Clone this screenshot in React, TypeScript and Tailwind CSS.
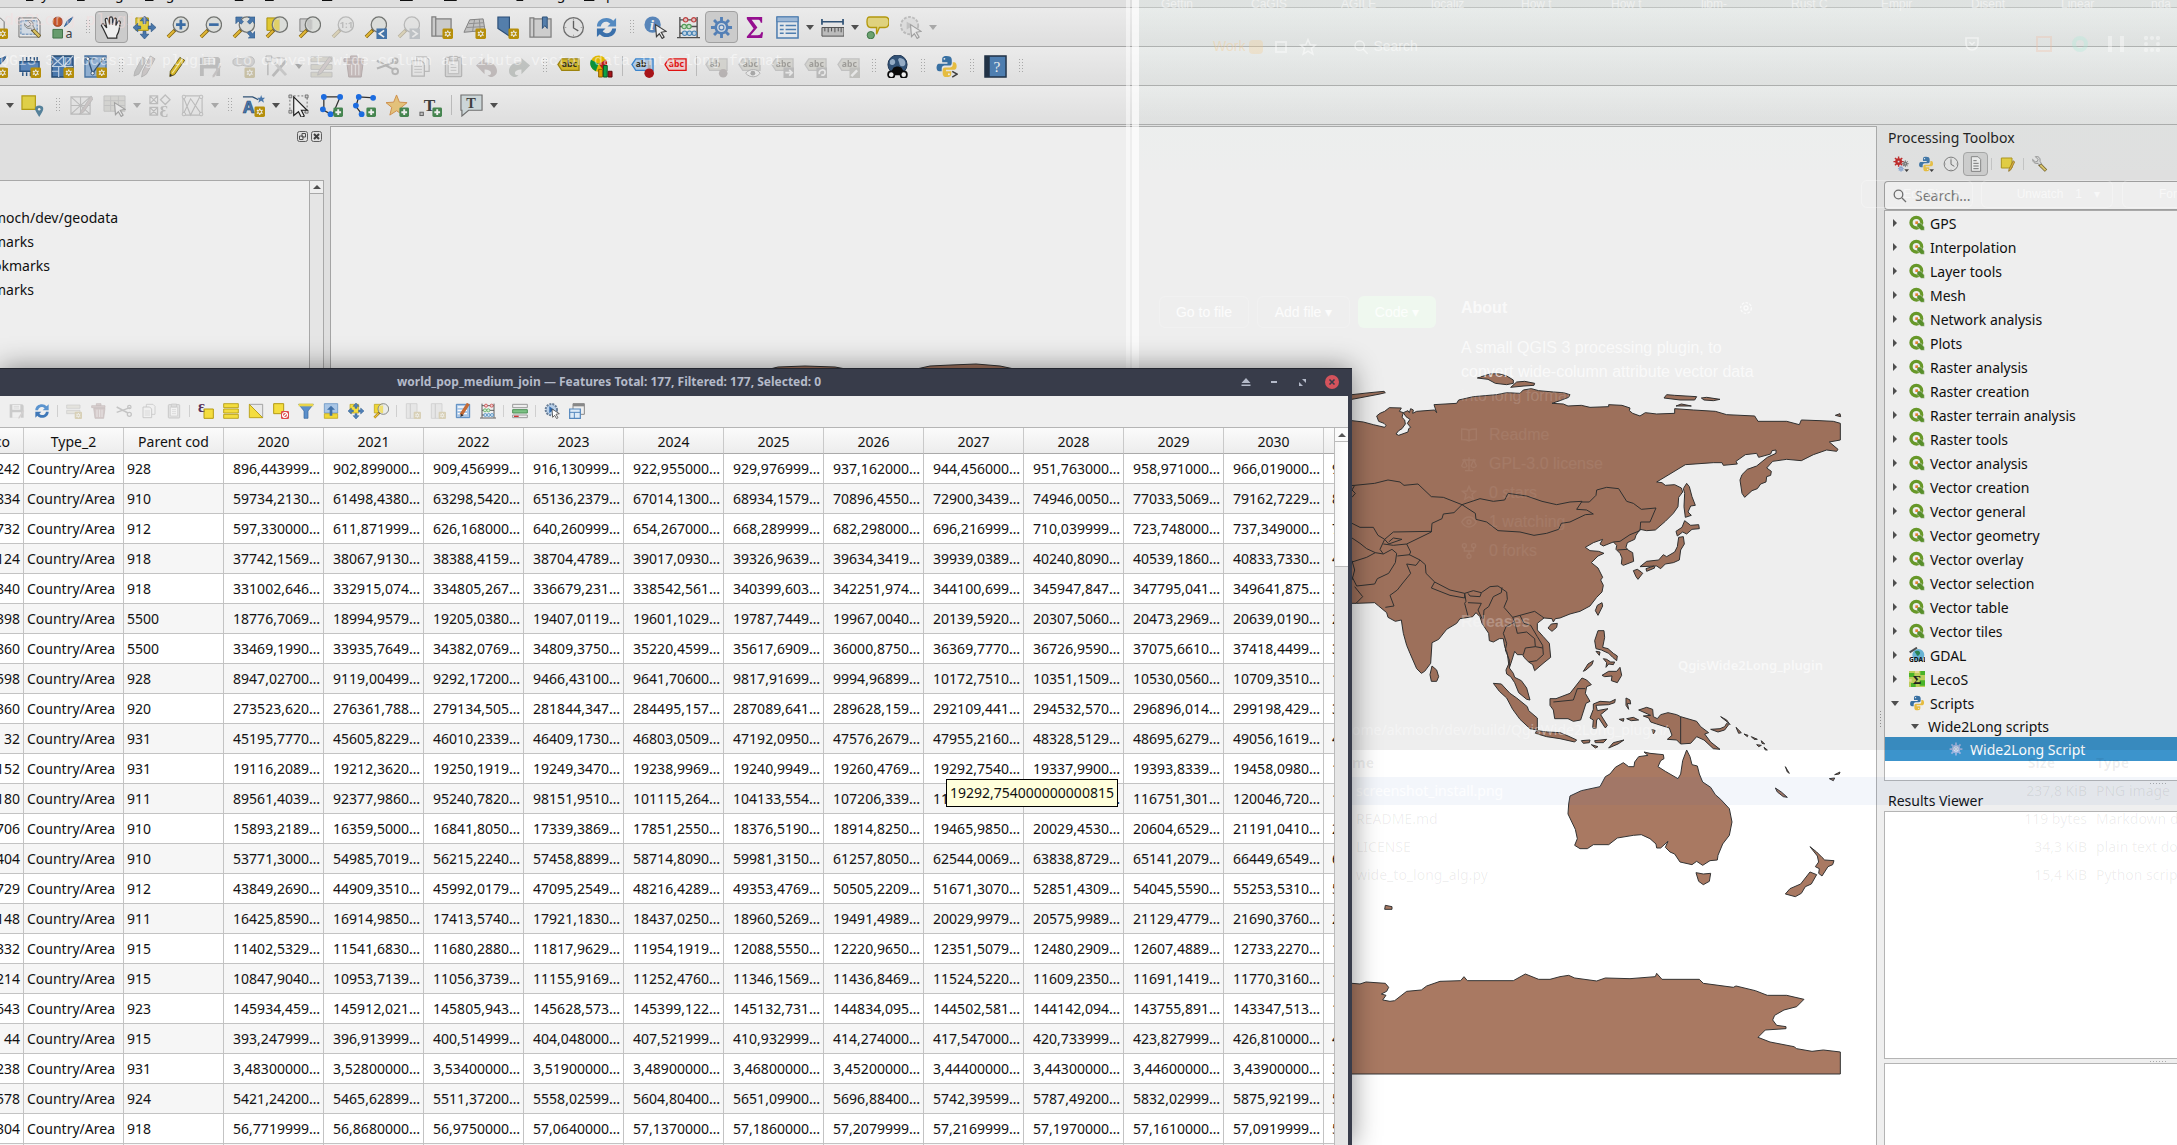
import React from "react";
import type { ReactNode } from "react";

/* ---------- icon parts (24 x 24 grid) ---------- */

const Ico = ({ children, small }: { children: ReactNode; small?: boolean }) => (
  <svg viewBox="0 0 24 24" className={small ? "size-4 shrink-0" : "size-[23px] shrink-0"} fill="none" aria-hidden="true">
    {children}
  </svg>
);

const Badge = () => (
  <g>
    <rect x="13" y="13" width="11" height="11" rx="1.5" fill="#c39a0c" />
    <path d="M18.5 15v7M15.5 16.7l6 3.6M21.5 16.7l-6 3.6" stroke="#fff" strokeWidth="1.3" />
    <circle cx="18.5" cy="18.5" r="1.9" stroke="#fff" strokeWidth="1" fill="#c39a0c" />
  </g>
);
const Plus = () => (
  <g>
    <rect x="14" y="14" width="10" height="10" rx="1.5" fill="#4c8f56" />
    <path d="M19 16v6M16 19h6" stroke="#fff" strokeWidth="2" />
  </g>
);
const Cursor = () => <path d="M12 9l11 7-5 1 3 5-2 1.500-3-5-3 3z" fill="#fff" stroke="#444" strokeWidth="1.200" />;
const Lens = ({ children }: { children?: ReactNode }) => (
  <>
    <path d="M10 14L2 22" stroke="#8a6a10" strokeWidth="3.600" />
    <path d="M8.500 15.500L2 22" stroke="#f1c43a" strokeWidth="2.200" />
    <circle cx="15.500" cy="9" r="8" fill="#e9ebe8" fillOpacity=".85" stroke="#7b7d7a" strokeWidth="1.300" />
    {children}
  </>
);
const Sheet = () => <path d="M3 2h13l4 4v16H3z" fill="#f7f7f7" stroke="#777" />;
const Tag = ({ fill, stroke, text = "abc", color = "#3a3320" }: { fill: string; stroke: string; text?: string; color?: string }) => (
  <>
    <path d="M5 4h18v12H5L1 10z" fill={fill} stroke={stroke} strokeWidth="1.400" />
    <text x="5" y="13" fontSize="9" fontWeight="bold" fontFamily="Noto Sans, sans-serif" fill={color}>{text}</text>
  </>
);
const PencilShape = ({ fill = "#e6c229" }: { fill?: string }) => (
  <>
    <path d="M14.500 2.500l5 3L9 20.500l-5 2 .5-5.500z" fill={fill} stroke="#6d6222" strokeWidth="1" />
    <path d="M17 4L6.500 19" stroke="#fff6b0" strokeWidth="1.200" />
    <path d="M4 22.500l.3-3 2.500 1.700z" fill="#333" />
  </>
);
const Gear = ({ c = "#5b8ac4", solid }: { c?: string; solid?: boolean }) => (
  <g stroke={c}>
    <path d="M12 1v22M1 12h22M4.200 4.200l15.600 15.600M19.800 4.200L4.200 19.800" strokeWidth="3" strokeDasharray="5 12.200 5 40" />
    <circle cx="12" cy="12" r="6" strokeWidth="2.600" fill={solid ? c : "#d9e3ef"} />
    <circle cx="12" cy="12" r="2.500" strokeWidth="1.200" fill="#e8eef5" />
  </g>
);
const Arrows4 = ({ c = "#4f80b8" }: { c?: string }) => (
  <path d="M12 0l4.500 5h-3v3h-3V5h-3zM12 24l-4.500-5h3v-3h3v3h3zM0 12l5-4.500v3h3v3H5v3zM24 12l-5 4.500v-3h-3v-3h3v-3z" fill={c} stroke="#2e5a8c" strokeWidth=".7" />
);
const Refresh = () => (
  <>
    <path d="M2 11C2 5 7 2 12 2c3 0 5 1 7 3l3-3v9h-9l3-3c-4-4-9-2-10 3z" fill="#5b94cf" />
    <path d="M22 13c0 6-5 9-10 9-3 0-5-1-7-3l-3 3v-9h9l-3 3c4 4 9 2 10-3z" fill="#3f78b8" />
  </>
);
const Python = () => (
  <>
    <path d="M12 1C7 1 7.500 3.500 7.500 6v1.500H13V9H4c-3 0-3.500 8 .5 8H7v-3c0-2 1.500-3 3-3h5c2 0 2.500-1.500 2.500-3V5c0-3-2-4-5.500-4z" fill="#3d78ae" />
    <path d="M12 23c5 0 5-2 5-4.500V17h-5.500v-1.500H20c3.500 0 3.500-8 0-8h-1.500V10c0 2.500-1.500 3-3 3h-5c-2 0-2.500 1.500-2.500 3v3c0 3 1.500 4 4 4z" fill="#f6ca45" />
    <circle cx="9.800" cy="4" r="1" fill="#fff" />
    <circle cx="14.500" cy="20" r="1" fill="#fff" />
  </>
);
const Clock = () => (
  <>
    <circle cx="12" cy="12" r="10.300" fill="#f2f2f2" stroke="#777" strokeWidth="1.400" />
    <path d="M12 5v7.500l5 3" stroke="#666" strokeWidth="1.400" />
    <path d="M12 2.500v2M12 19.500v2M2.500 12h2M19.500 12h2" stroke="#aaa" />
  </>
);
const Abacus = () => (
  <>
    <path d="M3 1v21M21 1v21M0 22.500h24M3 4h18M3 11h18M3 18h18" stroke="#555" strokeWidth="1.400" />
    <g strokeWidth="1.200">
      <g fill="#f0d0d0" stroke="#cc4747"><circle cx="9" cy="4" r="2.300" /><circle cx="17.500" cy="4" r="2.300" /></g>
      <g fill="#d5efd5" stroke="#59a95f"><circle cx="7.500" cy="11" r="2.300" /><circle cx="12.500" cy="11" r="2.300" /></g>
      <g fill="#cfe3f3" stroke="#4f8fc4"><circle cx="8" cy="18" r="2.300" /><circle cx="13" cy="18" r="2.300" /><circle cx="18" cy="18" r="2.300" /></g>
    </g>
  </>
);
const Wrench = () => (
  <>
    <path d="M11 12l10 10" stroke="#6c5a20" strokeWidth="5" />
    <path d="M12.500 13.500l8 8" stroke="#e8cf6c" strokeWidth="3" />
    <path d="M1 5l4 4 3-1 1-3-4-4c5-1 8 2 7 7l2 3-2.500 2.500L9 11C4 12 1 9 1 5z" fill="#e4e4e4" stroke="#777" />
  </>
);
const Cut = () => (
  <>
    <path d="M1 6l17 9M1 14L21 7" stroke="#777" strokeWidth="2.200" />
    <circle cx="20" cy="17" r="3" stroke="#777" strokeWidth="2" />
    <circle cx="20" cy="6" r="2.500" stroke="#777" strokeWidth="2" />
  </>
);
const Copy = () => (
  <>
    <path d="M8 2h10l3 3v12H8z" fill="#f4f4f4" stroke="#888" strokeWidth="1.300" />
    <path d="M3 6h10l3 3v13H3z" fill="#f4f4f4" stroke="#777" strokeWidth="1.300" />
    <path d="M5.500 12h8M5.500 15h8M5.500 18h8" stroke="#999" />
  </>
);
const Paste = () => (
  <>
    <rect x="3.500" y="2.500" width="17" height="20" rx="1" fill="#ccc" stroke="#777" strokeWidth="1.300" />
    <path d="M6.500 6h11v13.500h-11z" fill="#fafafa" stroke="#888" />
    <path d="M8 1.500h8V6H8z" fill="#bbb" stroke="#777" />
    <path d="M9 10h6M9 13h6M9 16h6" stroke="#999" />
  </>
);
const Trash = () => (
  <>
    <path d="M4 8h17l-2 15H6z" fill="#b98080" stroke="#8a5555" />
    <path d="M1 4h20v3H1zM8 4V1h7v3" fill="#c58f8f" stroke="#8a5555" />
    <path d="M9 10v11M13 10v11M16.500 10v11" stroke="#f0dcdc" strokeWidth="1.300" />
  </>
);
const Save = () => (
  <>
    <path d="M1 2h19l2 2v18H1z" fill="#8b8b8b" />
    <path d="M5 3h12v7H5zM5 14h13v8H5z" fill="#f1f1f1" />
    <path d="M7 5h8M7 7.500h8" stroke="#999" />
    <path d="M23 12l-7 11-2 .5.300-2.500 7-10.500z" fill="#a99" />
  </>
);
const GridPen = () => (
  <>
    <path d="M1 3h20v18H1zM1 12h20M11 3v18M1 3l20 18M21 3L1 21" stroke="#888" strokeWidth="1.200" fill="#eee" />
    <path d="M22 2L12 17l-2 4 4-2L24 5z" fill="#b99" stroke="#888" />
  </>
);
const Page = () => (
  <>
    <path d="M5 1h10l4 4v18H5z" fill="#fafafa" stroke="#8a8a8a" strokeWidth="1.500" />
    <path d="M8 7h5M8 11h8M8 15h8M8 19h8" stroke="#777" strokeWidth="1.500" />
  </>
);
const Hand = () => (
  <path
    d="M8 23L3.500 13.500 1.500 10c0-2 2-2.200 3-.8L7 12.500 5.500 4c0-2 2.500-2.200 3-.2L10 9V2.500c0-2 3-2 3 0V9l1.300-5.500c.5-2 3-1.500 2.700.5L16.500 10l2-4c1-1.600 3-.8 2.700 1L20 14c-.5 3-1.500 5-2.500 6.500V23z"
    fill="#fff"
    stroke="#333"
    strokeWidth="1.300"
  />
);
const Qlogo = () => (
  <>
    <circle cx="11" cy="11.500" r="8" stroke="#6fa32c" strokeWidth="5" fill="#fff" />
    <path d="M12 12h5.500l5.500 6v5h-5l-6-6z" fill="#5f9a2f" stroke="#efefef" strokeWidth=".8" />
    <path d="M9.500 9.500h4v4h-4z" fill="#ef8b35" />
  </>
);

const icons: Record<string, ReactNode> = {
  newLayout: <><Sheet /><Badge /></>,
  layoutMgr: <><path d="M1 2h19l3 4v16H1z" fill="#f9f9f9" stroke="#777" /><path d="M3 5h17v14H3z" fill="#dfe9f4" stroke="#5b88bb" strokeDasharray="3 1" /><g transform="translate(6 4) scale(.8)"><Wrench /></g></>,
  style: <><circle cx="7" cy="6" r="5" fill="#cf5a2e" stroke="#9c3d1b" strokeWidth=".7" /><path d="M2 14h10v9H2z" fill="#6fa876" stroke="#42784b" /><path d="M14 11l3-6 6-4-4 6z" fill="#5d8dc6" stroke="#34659d" /><text x="15" y="23" fontSize="13" fontFamily="Noto Sans, sans-serif" fill="#444">a</text></>,
  hand: <Hand />,
  panSel: <><path d="M3 2h13v13H3z" fill="#f4dd3f" stroke="#b59b12" /><Arrows4 /></>,
  zoomIn: <Lens><path d="M15.500 4v10M10.500 9h10" stroke="#3f74b0" strokeWidth="2.800" /></Lens>,
  zoomOut: <Lens><path d="M10.500 9h10" stroke="#3f74b0" strokeWidth="2.800" /></Lens>,
  zoomFull: <><Lens /><path d="M4 1h7L9 3l3 3-2.500 2.500-3-3L4 8zM24 1h-7l2 2-3 3 2.500 2.500 3-3L24 8zM24 23h-7l2-2-3-3 2.500-2.500 3 3 2.500-2.500z" fill="#4f80b8" stroke="#2e5a8c" strokeWidth=".6" /></>,
  zoomSel: <><path d="M2 2h13v13H2z" fill="#f0d736" stroke="#b59b12" /><Lens><path d="M10 4h5v11h-3l-3-4z" fill="#f0dc5a" opacity=".8" /></Lens></>,
  zoomLayer: <><path d="M2 3h11v13H2z" fill="#ddd" stroke="#888" /><Lens><path d="M10 4h5v10h-3l-3-4z" fill="#ccc" opacity=".7" /></Lens></>,
  zoomNative: <Lens><text x="9" y="13" fontSize="10" fontWeight="bold" fill="#888" fontFamily="Noto Sans, sans-serif">1:1</text></Lens>,
  zoomLast: <><Lens /><path d="M13 13h11v11H13z" fill="#4a7db5" /><path d="M21 15l-5 3.500 5 3.500" stroke="#fff" strokeWidth="1.800" /></>,
  zoomNext: <><Lens /><path d="M13 13h11v11H13z" fill="#8a9bb0" /><path d="M16 15l5 3.500-5 3.500" stroke="#fff" strokeWidth="1.800" /></>,
  newView: <><path d="M2 1h4v20H2zM6 3h16v18H3" fill="#d9d9d9" stroke="#888" strokeWidth="1.300" /><Badge /></>,
  new3d: <><path d="M7 4l14-1 2 12L1 17z" fill="#cfcfcf" stroke="#888" /><path d="M6 8l16-1M4 12l19-1M12 4l-2 12M17 3l1 12" stroke="#999" /><Badge /></>,
  newBookmark: <><path d="M2 1h12v20l-6-4-6-4z" fill="#5b87b8" stroke="#2f5580" strokeWidth="1.200" /><Badge /></>,
  bookmarks: <><path d="M1 2h4v20H1zM5 3h18v19H2" fill="#dcdcdc" stroke="#888" strokeWidth="1.300" /><path d="M14 1h5v12l-2.500-3-2.500 3z" fill="#5b87b8" stroke="#2f5580" /></>,
  clock: <Clock />,
  refresh: <Refresh />,
  identify: <><circle cx="9" cy="9" r="8.500" fill="#5f8fc7" /><text x="6" y="15" fontSize="16" fontStyle="italic" fontWeight="bold" fill="#fff" fontFamily="Liberation Serif, serif">i</text><Cursor /></>,
  abacus: <Abacus />,
  gear: <Gear />,
  sigma: <path d="M4 1h16v6h-1.500C18 4.500 17 4 15 4H9l6 8-7 8h7c3 0 3.500-1 4-3H21l-1 6H4v-1.500L11 13 4 3z" fill="#a0119a" />,
  table: <><path d="M1 1h22v22H1z" fill="#f4f8fc" stroke="#5487bd" strokeWidth="1.600" /><path d="M1 1h22v5H1z" fill="#a9c6e6" stroke="#5487bd" /><path d="M4 10h4M10 10h11M4 14h4M10 14h11M4 18h4M10 18h11" stroke="#5487bd" strokeWidth="1.600" /></>,
  ruler: <><path d="M1 6h22M1 3v6M23 3v6" stroke="#35597f" strokeWidth="1.800" /><path d="M1 12h23v9H1z" fill="#c9c9c9" stroke="#555" /><path d="M4 12v4M7.500 12v5M11 12v4M14.500 12v5M18 12v4M21 12v5" stroke="#555" /></>,
  tip: <><path d="M4 1h16c3 0 4 2 4 5s-1 6-4 6h-6l-3 7v-7H5c-3 0-4-2-4-6s1-5 3-5z" fill="#efe288" stroke="#c0a30e" strokeWidth="1.400" /><circle cx="5" cy="20" r="3.800" fill="#73ad78" stroke="#3f7a48" /></>,
  action: <><circle cx="11" cy="10" r="9" fill="#ddd" stroke="#888" strokeWidth="2" strokeDasharray="3 1.500" /><path d="M8 6l7 4-7 4z" fill="#999" /><Cursor /></>,
  feather: <><path d="M0 14C3 5 14 6 22 1c-1 5-6 8-8 10z" fill="#4f80b8" stroke="#2e5a8c" /><Badge /></>,
  chip: <><path d="M2 7h20v10H2z" fill="#6290c8" stroke="#2e5a8c" strokeWidth="1.400" /><path d="M5 2v4M9 2v4M13 2v4M17 2v4M20 2v4M5 18v4M9 18v4M13 18v4" stroke="#2e5a8c" strokeWidth="1.500" /><Badge /></>,
  mesh: <><path d="M1 1h22v22H1z" fill="#4f80b8" stroke="#274d78" strokeWidth="1.400" /><path d="M1 12h22M13 1v11M1 1l12 11M13 1L1 12M13 12L23 1M8 12v11M1 17h7" stroke="#cfe0f3" strokeWidth="1.200" /><Badge /></>,
  virtual: <><path d="M1 1h22v22H1z" fill="#9bbce0" stroke="#4f7cad" strokeWidth="1.400" /><path d="M4 4l5 15L20 4M4 4h7" stroke="#35597f" strokeWidth="1.400" /><g fill="#fff" stroke="#35597f"><circle cx="4" cy="4" r="1.800" /><circle cx="9" cy="19" r="1.800" /><circle cx="20" cy="4" r="1.800" /></g><Badge /></>,
  pencils: <><path d="M10 2l4 3L6 20l-5 2 1-5z" fill="#999" stroke="#777" /><path d="M18 1l5 3-9 16-5 3 1-6z" fill="#b9a0a0" stroke="#777" /></>,
  pencil: <PencilShape />,
  save: <Save />,
  addFeature: <><path d="M3 4c3-3 5 0 8 0s8-4 11-1 1 9-4 9-6-2-9-1-8 0-8-3 0-3 2-4z" fill="#bbb" stroke="#888" /><Badge /></>,
  vertex: <><path d="M3 3h18M3 3v18" stroke="#777" strokeWidth="1.400" /><path d="M1 1h6v6H1z" fill="#eee" stroke="#777" /><path d="M22 6L8 22" stroke="#888" strokeWidth="3" /><path d="M10 8l12 13" stroke="#aaa" strokeWidth="3" /></>,
  multi: <><path d="M1 2h22v5H1zM1 10h22v5H1zM1 18h22v5H1z" fill="#cfc79a" stroke="#999" /><path d="M20 2L9 17l-1 4 4-2L23 4z" fill="#caa" stroke="#888" /></>,
  trash: <Trash />,
  cut: <Cut />,
  copy: <Copy />,
  paste: <Paste />,
  undo: <path d="M1 11L10 3v5c9-1 13 4 13 9 0 3-2 5-5 6-3 0-4-1-5-2 5 1 6-6-3-6v5z" fill="#a08484" />,
  redo: <path d="M23 11L14 3v5C5 7 1 12 1 17c0 3 2 5 5 6 3 0 4-1 5-2-5 1-6-6 3-6v5z" fill="#8b9b8f" />,
  tag: <Tag fill="#e2c42f" stroke="#a88d10" />,
  chart: <><circle cx="9" cy="9" r="8.500" fill="#efc500" /><path d="M9 9L1 5a9 9 0 00 5 12z" fill="#0a9c40" /><path d="M9 9l8-4a9 9 0 01-3 11z" fill="#c8201c" /><path d="M9 15h4v8H9z" fill="#f2a900" stroke="#946800" /><path d="M14 11h4v12h-4z" fill="#0fae4c" stroke="#075d27" /><path d="M19 17h4v6h-4z" fill="#b3161b" stroke="#5c090c" /></>,
  tagPin: <><Tag fill="#bdd8f5" stroke="#3f8edb" text="ab" /><path d="M19 6v8" stroke="#bbb" strokeWidth="3" /><circle cx="19" cy="19" r="5" fill="#b3161b" /></>,
  tagRed: <Tag fill="#fbd9d9" stroke="#f01313" color="#f01313" />,
  tagPinOff: <><Tag fill="#c9c7ab" stroke="#999" text="ab" /><circle cx="19" cy="19" r="4.500" fill="#8d7272" /></>,
  tagEye: <><Tag fill="#c9c7ab" stroke="#999" /><path d="M8 19c4-5 12-5 15 0-3 5-11 5-15 0z" fill="#fff" stroke="#666" /><circle cx="15.500" cy="19" r="2.500" fill="#555" /></>,
  tagMove: <><Tag fill="#c9c7ab" stroke="#999" /><path d="M13 13h11v11H13z" fill="#888" /><path d="M15 18.500h7M19 15.500l3 3-3 3" stroke="#fff" strokeWidth="1.800" /></>,
  tagRotate: <><Tag fill="#c9c7ab" stroke="#999" /><path d="M13 13h11v11H13z" fill="#888" /><path d="M16 20c-1-5 6-6 6-2s-3 3-4 3" stroke="#fff" strokeWidth="1.800" /></>,
  tagEdit: <><Tag fill="#c9c7ab" stroke="#999" /><path d="M13 13h11v11H13z" fill="#998" /><path d="M15 22l6-6" stroke="#fff" strokeWidth="2.500" /></>,
  globe: <><circle cx="12" cy="10" r="10" fill="#36587f" stroke="#213a58" /><path d="M4 6c4-5 7 1 5 3s-3 2-5 0zM14 3c5 0 7 4 6 7s-6 2-6-1-3-4 0-6z" fill="#9fb8d3" /><path d="M8 13l3-1h2l3 1 5 8H3z" fill="#0b0b0b" /><circle cx="5.500" cy="20.500" r="3.300" fill="#fff" stroke="#0b0b0b" strokeWidth="1.800" /><circle cx="18.500" cy="20.500" r="3.300" fill="#fff" stroke="#0b0b0b" strokeWidth="1.800" /></>,
  python: <><Python /><path d="M18 17l5 3-5 3" stroke="#444" strokeWidth="1.600" /></>,
  help: <><path d="M1 1h22v22H1z" fill="#5487bd" stroke="#24364b" strokeWidth="1.500" /><path d="M1 1h5v22H1z" fill="#24364b" /><text x="10" y="18" fontSize="16" fill="#fff" fontFamily="Liberation Serif, serif">?</text></>,
  notePin: <><path d="M1 2h14v14H1z" fill="#efde4e" stroke="#bda514" strokeWidth="1.200" /><path d="M19 12c5 0 5 4 3 7l-3 5-3-5c-2-3-2-7 3-7z" fill="#5c8ba6" /><circle cx="19" cy="16" r="1.300" fill="#fff" /></>,
  gridPen: <GridPen />,
  gridSel: <><path d="M1 2h22v16H1zM1 7h22M1 12h22M8 2v16M16 2v16" stroke="#999" fill="#c9c7b5" /><Cursor /></>,
  shapes: <><path d="M2 2h8v8H2zM2 14h8v8H2zM2 2l8 8M10 2l-8 8M2 14l8 8M10 14l-8 8M18 1l5 5-5 5-5-5z" stroke="#888" strokeWidth="1.300" /><text x="12" y="24" fontSize="17" fontWeight="bold" fill="#888" fontFamily="Liberation Serif, serif">Ɛ</text></>,
  meshEdit: <><path d="M2 2h20v20H2zM2 2l8 20L20 2M2 22L10 5l12 17" stroke="#888" strokeWidth="1.200" /><g fill="#eee" stroke="#888"><circle cx="3" cy="3" r="1.800" /><circle cx="21" cy="3" r="1.800" /><circle cx="3" cy="21" r="1.800" /><circle cx="21" cy="21" r="1.800" /></g></>,
  annotation: <><path d="M1 3h10l6 3" stroke="#35597f" strokeWidth="1.400" /><path d="M20 1l1 3h3l-2 2 1 3-3-2-3 2 1-3-2-2h3z" fill="#4f80b8" /><text x="1" y="20" fontSize="17" fontWeight="bold" fill="#4f80b8" stroke="#274d78" strokeWidth=".6" fontFamily="Noto Sans, sans-serif">A</text><Badge /></>,
  select: <><path d="M3 2h18v17H3z" stroke="#777" strokeDasharray="2 2" /><path d="M2 1h3v3H2zM19 1h3v3h-3zM2 17h3v3H2zM19 17h3v3h-3z" fill="#ddd" stroke="#666" strokeWidth=".8" /><path d="M7 3l14 14-6 0 3 6-3 1.500-3-6-5 4z" fill="#fff" stroke="#222" strokeWidth="1.200" /></>,
  polygon: <><path d="M4 3h17L13 22l-9-5z" stroke="#333" strokeWidth="1.300" /><g fill="#1f74f0"><circle cx="4" cy="3" r="3" /><circle cx="21" cy="3" r="3" /><circle cx="3" cy="16" r="3" /><circle cx="11" cy="21" r="3" /></g><Plus /></>,
  line: <><path d="M22 4L6 3 3 13l7 9" stroke="#333" strokeWidth="1.300" /><g fill="#1f74f0"><circle cx="21" cy="4" r="3" /><circle cx="6" cy="3" r="3" /><circle cx="3" cy="12" r="3" /><circle cx="9" cy="21" r="3" /></g><Plus /></>,
  star: <><path d="M11 1l3 7.500 8 .5-6 5 2 8-7-4.500L4 22l2-8L0 9l8-.5z" fill="#f4cf83" stroke="#dc9a52" /><Plus /></>,
  text: <><text x="5" y="18" fontSize="18" fontWeight="bold" fill="#444" fontFamily="Liberation Serif, serif">T</text><rect x="1" y="19" width="3.500" height="3.500" fill="#ccc" stroke="#666" /><Plus /></>,
  bubble: <><path d="M1 1h22v16H9l-7 6V17H1z" fill="#dbe6e8" stroke="#777" strokeWidth="1.200" /><text x="6.500" y="14.500" fontSize="15" fontWeight="bold" fill="#444" fontFamily="Liberation Serif, serif">T</text></>,
  addRow: <><path d="M1 3h20v5H1zM1 11h20v5H1z" fill="#d5d0b0" stroke="#888" /><Badge /></>,
  epsilon: <><path d="M9 9h14v14H9z" fill="#f4dd3f" stroke="#b59b12" strokeWidth="1.500" /><text x="0" y="14" fontSize="24" fontWeight="bold" fill="#58315a" fontFamily="Liberation Serif, serif">ε</text></>,
  selectAll: <path d="M1 1h22v6H1zM1 9h22v6H1zM1 17h22v6H1z" fill="#f4dd3f" stroke="#b59b12" strokeWidth="1.300" />,
  invert: <><path d="M2 2h20v20z" fill="#e9e9e9" stroke="#999" strokeWidth="1.300" /><path d="M2 2v20h20z" fill="#f4dd3f" stroke="#b59b12" strokeWidth="1.300" /></>,
  deselect: <><path d="M1 1h15v15H1z" fill="#f4dd3f" stroke="#b59b12" strokeWidth="1.500" /><rect x="12" y="12" width="12" height="12" rx="2" fill="#dd4a4a" /><circle cx="18" cy="18" r="3.800" stroke="#fff" strokeWidth="1.600" /><path d="M15 21l6-6" stroke="#fff" strokeWidth="1.600" /></>,
  filter: <><path d="M1 2h22l-8 10v11h-6V12z" fill="#5b8fcb" stroke="#35659b" /><path d="M1 1h22v4H1z" fill="#e8d44a" /></>,
  moveTop: <><path d="M2 1h20v14H2z" fill="#a9c6e6" stroke="#5487bd" /><path d="M2 16h20v7H2z" fill="#f0d736" stroke="#b59b12" /><path d="M12 4l6 6h-4v9h-4v-9H6z" fill="#3f70a8" /></>,
  newField: <><path d="M2 1h6v22H2zM8 1h10v22H8z" fill="#d6d6d6" stroke="#999" strokeWidth="1.300" /><Badge /></>,
  editRow: <><path d="M2 2h20v20H2z" fill="#a9c6e6" stroke="#5487bd" strokeWidth="1.500" /><path d="M4 6h14M4 11h14M4 16h14" stroke="#fff" strokeWidth="2" /><path d="M20 1L9 18" stroke="#c46a35" strokeWidth="5" /><path d="M8 21l1-5 4 2.500z" fill="#333" /></>,
  form: <><path d="M1 2h22v5H1zM1 18h22v4H1z" fill="#eee" stroke="#999" strokeWidth="1.500" /><path d="M1 10h22v5H1z" fill="#7cc284" stroke="#4f9158" strokeWidth="1.500" /><path d="M3 20h7" stroke="#c33" strokeWidth="2" /></>,
  actionBlue: <><circle cx="11" cy="10" r="8.500" fill="#b8cfe8" stroke="#6a7f98" strokeWidth="3" strokeDasharray="3 1.500" /><path d="M8 5l7 5-7 5z" fill="#2f69ad" /><Cursor /></>,
  dock: <><path d="M6 1h17v16H6z" fill="#eee" stroke="#888" strokeWidth="1.500" /><path d="M6 1h17v4H6z" fill="#888" /><path d="M1 9h16v14H1z" fill="#dceaf7" stroke="#5487bd" strokeWidth="1.800" /><path d="M1 14h16M8 14v9" stroke="#5487bd" strokeWidth="1.500" /></>,
  models: <><g transform="scale(.7)"><Gear c="#c92222" solid /></g><g transform="translate(13 6) scale(.46)"><Gear c="#777" solid /></g><g transform="translate(7 14) scale(.42)"><Gear c="#86a8dc" solid /></g><path d="M17 20h7l-3.500 4z" fill="#444" /></>,
  pythonSmall: <><Python /><path d="M17 20h7l-3.500 4z" fill="#444" /></>,
  note: <><path d="M2 3h16v15l-5 0H2z" fill="#f0d93e" stroke="#b59b12" strokeWidth="1.500" /><path d="M22 9l-6 12-3 2 .5-3.500L20 7z" fill="#e9b73b" stroke="#8a6a10" /></>,
  wrench: <Wrench />,
  page: <Page />,
};

/* ---------- toolbar parts ---------- */

type ToolProps = { name: string; label: string; off?: boolean; on?: boolean };
const Tool = ({ name, label, off, on }: ToolProps) => (
  <button type="button" aria-label={label} disabled={off} className={`flex h-8 w-[33px] shrink-0 items-center justify-center ${on ? "rounded-sm border border-[#adadad] bg-[#dadada]" : ""}`}>
    <span className={off ? "opacity-40 grayscale-50" : ""}><Ico>{icons[name]}</Ico></span>
  </button>
);
const SmallTool = ({ name, label, off, on }: ToolProps) => (
  <button type="button" aria-label={label} disabled={off} className={`flex h-6 w-[25px] shrink-0 items-center justify-center ${on ? "rounded-sm border border-[#adadad] bg-[#dadada]" : ""}`}>
    <span className={off ? "opacity-35 grayscale-50" : ""}><Ico small>{icons[name]}</Ico></span>
  </button>
);
const Triangle = ({ off }: { off?: boolean }) => (
  <svg viewBox="0 0 8 5" className={`h-[5px] w-2 ${off ? "opacity-40" : ""}`} aria-hidden="true"><path d="M0 0h8L4 5z" fill="#555" /></svg>
);
const Drop = ({ off, label }: { off?: boolean; label: string }) => (
  <button type="button" aria-label={label} disabled={off} className="flex h-8 w-3 shrink-0 items-center justify-center"><Triangle off={off} /></button>
);
const Handle = () => (
  <div className="flex w-4 shrink-0 justify-center">
    <div className="h-4 w-[5px] bg-[radial-gradient(circle,#b4b4b4_1px,transparent_1px)] bg-[size:3px_3px]" />
  </div>
);
const Sep = () => <div className="flex w-2 shrink-0 justify-center"><div className="h-5 w-px bg-[#c8c8c8]" /></div>;
const SmallSep = () => <div className="flex w-[7px] shrink-0 justify-center"><div className="h-3 w-px bg-[#cfcfcf]" /></div>;
const Bar = ({ children, pad }: { children: ReactNode; pad: string }) => (
  <div className={`flex h-[39px] shrink-0 items-center border-b border-[#b2b2b2] bg-linear-to-b from-[#fcfcfc] to-[#efefef] ${pad}`}>{children}</div>
);

const menu: [string, string, string, string][] = [
  ["", "L", "ayer", "w-[51px]"], ["", "S", "ettings", "w-[68px]"], ["", "P", "lugins", "w-[62px]"], ["Vect", "o", "r", "w-[58px]"],
  ["", "R", "aster", "w-[57px]"], ["", "D", "atabase", "w-[78px]"], ["", "W", "eb", "w-[44px]"], ["", "M", "esh", "w-[50px]"],
  ["Pro", "c", "essing", "w-[90px]"], ["", "H", "elp", "w-[40px]"],
];

const Toolbars = () => (
  <header className="shrink-0">
    <nav className="flex h-2 items-end overflow-hidden border-b border-[#c6c6c6] bg-[#efefef] pl-[26px]">
      {menu.map(([a, u, b, w]) => (
        <a key={u + b} href="#menu" className={`${w} block h-5 shrink-0 leading-[14px]`}>{a}<span className="underline">{u}</span>{b}</a>
      ))}
    </nav>
    <Bar pad="-ml-5">
      <Tool name="newLayout" label="New print layout" /><Tool name="layoutMgr" label="Layout manager" /><Tool name="style" label="Style manager" />
      <Handle />
      <Tool name="hand" label="Pan map" on /><Tool name="panSel" label="Pan to selection" /><Tool name="zoomIn" label="Zoom in" />
      <Tool name="zoomOut" label="Zoom out" /><Tool name="zoomFull" label="Zoom full" /><Tool name="zoomSel" label="Zoom to selection" />
      <Tool name="zoomLayer" label="Zoom to layer" /><Tool name="zoomNative" label="Native resolution" off /><Tool name="zoomLast" label="Zoom last" />
      <Tool name="zoomNext" label="Zoom next" off /><Tool name="newView" label="New map view" /><Tool name="new3d" label="New 3D view" />
      <Tool name="newBookmark" label="New bookmark" /><Tool name="bookmarks" label="Bookmarks" /><Tool name="clock" label="Temporal controller" />
      <Tool name="refresh" label="Refresh" />
      <Handle />
      <Tool name="identify" label="Identify" /><Tool name="abacus" label="Field calculator" /><Tool name="gear" label="Toolbox" on />
      <Tool name="sigma" label="Statistics" /><Tool name="table" label="Attribute table" /><Drop label="Table options" />
      <Tool name="ruler" label="Measure" /><Drop label="Measure options" /><Tool name="tip" label="Map tips" />
      <Tool name="action" label="Run action" off /><Drop label="Action options" off />
    </Bar>
    <Bar pad="-ml-5">
      <Tool name="feather" label="New layer" /><Tool name="chip" label="Scratch layer" /><Tool name="mesh" label="Mesh layer" /><Tool name="virtual" label="Virtual layer" />
      <Handle />
      <Tool name="pencils" label="Current edits" off /><Tool name="pencil" label="Toggle editing" /><Tool name="save" label="Save edits" off />
      <Tool name="addFeature" label="Add feature" off /><Tool name="vertex" label="Vertex tool" off /><Drop label="Vertex options" off />
      <Tool name="multi" label="Modify attributes" off /><Tool name="trash" label="Delete selected" off /><Tool name="cut" label="Cut" off />
      <Tool name="copy" label="Copy" off /><Tool name="paste" label="Paste" off /><Tool name="undo" label="Undo" off /><Tool name="redo" label="Redo" off />
      <Handle />
      <Tool name="tag" label="Labels" /><Tool name="chart" label="Diagrams" /><Sep />
      <Tool name="tagPin" label="Pinned labels" /><Tool name="tagRed" label="Unplaced labels" /><Sep />
      <Tool name="tagPinOff" label="Pin labels" off /><Tool name="tagEye" label="Show labels" off /><Tool name="tagMove" label="Move label" off />
      <Tool name="tagRotate" label="Rotate label" off /><Tool name="tagEdit" label="Change label" off />
      <Handle /><Tool name="globe" label="Metasearch" /><Handle /><Tool name="python" label="Python console" />
      <Handle /><Tool name="help" label="Help contents" /><Handle />
    </Bar>
    <Bar pad="pl-1">
      <Drop label="Annotations" /><Tool name="notePin" label="Spatial bookmark" />
      <Handle />
      <Tool name="gridPen" label="Edit mesh" off /><Tool name="gridSel" label="Select mesh" off /><Drop label="Mesh options" off />
      <Tool name="shapes" label="Transform" off /><Tool name="meshEdit" label="Reindex" off /><Drop label="Reindex options" off />
      <Handle />
      <Tool name="annotation" label="New annotation layer" /><Drop label="Annotation options" /><Tool name="select" label="Modify annotations" />
      <Tool name="polygon" label="Polygon annotation" /><Tool name="line" label="Line annotation" /><Tool name="star" label="Marker annotation" />
      <Tool name="text" label="Text annotation" /><Sep /><Tool name="bubble" label="Text bubble" /><Drop label="Bubble options" />
    </Bar>
  </header>
);

/* ---------- left dock ---------- */

const UpArrow = () => (
  <svg viewBox="0 0 8 4" className="h-1 w-2" aria-hidden="true"><path d="M0 4h8L4 0z" fill="#555" /></svg>
);

const BrowserDock = () => (
  <aside className="flex w-[324px] shrink-0 flex-col">
    <div className="flex h-[54px] items-start justify-end gap-[3px] pt-[5px] pr-0.5">
      <button type="button" aria-label="Float panel" className="size-[11px]">
        <svg viewBox="0 0 11 11"><rect x=".5" y=".5" width="10" height="10" rx="2" fill="none" stroke="#666" /><path d="M5 2.500h3.500V6H5zM2.500 5H6v3.500H2.500z" fill="none" stroke="#555" /></svg>
      </button>
      <button type="button" aria-label="Close panel" className="size-[11px]">
        <svg viewBox="0 0 11 11"><rect x=".5" y=".5" width="10" height="10" rx="2" fill="none" stroke="#666" /><path d="M3 3l5 5M8 3L3 8" stroke="#444" strokeWidth="2" /></svg>
      </button>
    </div>
    <div className="flex flex-1 border-y border-r border-[#b4b4b4] bg-white">
      <ul className="flex-1 overflow-hidden pt-[25px] leading-6">
        {["moch/dev/geodata", "marks", "okmarks", "marks"].map((t, i) => (
          <li key={i} className="-ml-[7px]">{t}</li>
        ))}
      </ul>
      <div className="flex w-3.5 flex-col border-l border-[#b4b4b4] bg-[#f6f6f6]">
        <div className="flex h-[13px] items-center justify-center border-b border-[#b4b4b4] bg-white"><UpArrow /></div>
      </div>
    </div>
  </aside>
);

/* ---------- map ---------- */

const north: string[] = [
  "M-60 170L36 182 70 186 100 194 134 202 138 196 132 190 116 184 110 168 120 160 134 154 148 143 184 144 178 154 190 158 186 172 194 180 196 192 186 206 176 212 168 222 176 226 204 216 206 206 212 202 202 190 210 178 198 170 190 158 204 152 208 158 212 146 220 150 218 160 230 154 284 150 290 158 282 134 350 130 356 120 400 110 470 104 500 98 540 100 550 90 574 86 596 92 640 96 670 98 690 104 686 112 660 122 636 130 670 132 684 138 724 136 750 142 806 140 806 134 846 136 870 144 868 152 878 160 900 168 916 158 950 162 1004 160 1004 146 1060 150 1126 154 1160 164 1244 168 1254 184 1340 184 1378 194 1384 180 1440 182 1480 184 1501 190 1501 240 1468 246 1494 268 1490 274 1460 270 1420 284 1384 302 1340 298 1298 304 1280 324 1294 334 1292 346 1280 350 1278 366 1262 372 1252 386 1236 392 1214 412 1206 400 1200 360 1206 344 1222 328 1250 318 1282 292 1308 280 1308 270 1296 272 1292 282 1256 292 1250 280 1216 284 1188 304 1192 312 1150 316 1146 308 1120 308 1036 314 990 342 950 366 966 368 976 376 1004 374 1024 384 1028 396 1016 412 1014 440 1000 460 976 484 946 510 920 512 900 508 888 526 884 538 862 548 858 562 864 570 878 578 881 604 850 616 844 612 846 594 840 580 828 568 830 556 820 546 790 558 780 552 788 538 760 548 736 562 750 572 776 574 792 580 774 588 754 608 774 624 788 652 782 660 790 676 786 696 770 712 750 738 720 754 690 762 660 774 646 776 640 786 636 776 612 774 592 790 592 810 610 830 628 850 632 892 612 908 584 932 578 914 566 906 552 892 548 884 532 884 524 874 516 900 508 924 520 940 524 952 544 962 560 984 570 1020 560 1018 536 998 524 968 512 950 500 942 498 930 506 912 502 880 494 860 490 836 478 836 460 846 448 842 446 820 426 790 420 770 408 758 398 770 360 776 350 790 320 808 296 838 276 848 272 910 254 934 244 940 230 926 210 880 200 856 190 820 184 780 166 784 144 772 140 758 116 738 104 728 50 730 -60 730z",
  "M412 54L450 42 476 41 500 48 520 60 520 70 500 74 466 70 444 58z",
  "M512 82L530 66 554 64 584 70 582 76 552 78z",
  "M-30 106L36 104 90 98 132 94 136 98 120 102 36 118 -30 130z",
  "M972 114L980 104 1004 106 1070 110 1064 120 1020 120z",
  "M1008 138L1024 132 1054 138z",
  "M1084 114L1100 112 1140 118 1120 122 1092 120z",
  "M1486 166L1500 161 1502 170z",
  "M1040 370L1048 380 1056 410 1066 436 1052 438 1044 456 1054 466 1036 472 1032 440 1034 400 1030 386z",
  "M1034 482L1052 496 1076 494 1078 506 1056 508 1040 522 1028 516 1012 528 1008 514 1026 502z",
  "M1016 532L1030 530 1033 552 1022 570 1018 600 1000 608 976 612 962 626 950 618 900 620 920 604 956 600 970 584 980 590 1004 576 1012 560z",
  "M880 632L892 628 904 636 908 640 894 658 888 650z",
  "M918 626L942 618 944 624 920 634z",
  "M786 728L788 738 774 766 766 752 772 736z",
  "M624 804L634 792 652 790 650 802 636 814z",
  "M276 918L290 930 296 950 290 964 274 964 270 944z",
  "M774 812L792 812 794 832 788 862 804 866 820 880 832 888 830 902 818 892 806 880 784 870 768 866 764 842z",
  "M768 874L780 876 778 886zM790 896L800 898 812 906 824 906 820 914 806 912 798 922 800 908z",
  "M786 946L806 934 830 934 840 922 845 946 832 968 814 962 816 948 794 950z",
  "M730 934L744 912 760 902 756 914 738 930z",
  "M460 970L484 972 510 1000 530 1014 562 1040 566 1052 592 1074 592 1110 570 1106 540 1078 518 1048 500 1014 478 994z",
  "M630 1016L648 1016 690 1000 726 954 740 960 754 974 740 980 736 1000 750 1024 738 1030 722 1080 700 1084 684 1076 644 1076 640 1050 630 1036z",
  "M760 1032L780 1024 810 1026 826 1018 824 1028 806 1034 768 1036 772 1052 804 1046 782 1064 802 1096 796 1104 776 1074 770 1080 768 1106 758 1104 760 1080 750 1074 760 1048z",
  "M858 1014L870 1020 872 1032 862 1030 866 1048 858 1036z",
  "M838 1078L852 1076 850 1084zM860 1076L880 1072 896 1080 874 1082z",
  "M590 1112L622 1116 660 1118 684 1128 710 1140 704 1146 660 1136 620 1130 586 1120z",
  "M724 1142L750 1140 748 1148 730 1150zM764 1142L800 1138 790 1148 766 1148zM754 1154L774 1160 766 1164zM806 1164L820 1148 852 1140 834 1152z",
  "M896 1050L920 1042 938 1048 940 1070 952 1076 962 1064 984 1058 1010 1064 1022 1070 1070 1084 1082 1100 1106 1118 1094 1122 1112 1146 1140 1168 1120 1166 1092 1140 1070 1130 1052 1150 1022 1152 1010 1140 982 1138 996 1126 988 1104 950 1092 932 1086 926 1074 910 1068 932 1066z",
  "M936 1108L946 1112 940 1122zM1112 1108L1140 1106 1154 1100 1160 1090 1166 1094 1154 1110 1134 1116zM1142 1070L1160 1080 1170 1094 1162 1086z",
  "M1188 1102L1204 1118 1196 1120zM1212 1122L1224 1126 1222 1130zM1234 1130L1252 1138 1242 1138zM1264 1142L1274 1152 1266 1150zM1250 1154L1264 1156 1256 1160zM1272 1162L1282 1170 1276 1170z",
];
const borders =
  "M-20 380L44 376 104 370 144 360 180 366 192 376 234 372 274 410 310 412 366 434M366 434L420 416 460 424 494 420 504 400 560 408 606 424 650 434 690 426 726 424 710 448 740 450 760 462 736 464 690 486 664 490 656 508 620 520 582 526 540 516 474 512 440 486 408 478 406 460zM724 426L748 426 768 406 770 390 800 382 836 386 860 424 880 430 904 448 948 444 930 486 902 486 900 512 870 524 840 544 820 546M832 570L862 568M366 434L342 458 310 462 306 476 276 490 274 516 200 552 212 576 208 584 240 600 256 614 258 640 284 666 330 690 374 700 400 692 424 698 450 680 474 678 500 696 502 718 492 742 518 772 540 766 584 754 604 768 612 774M284 666L274 684 330 706 374 714 374 700M384 700L390 708 420 710 424 698M374 700L378 724 374 730 384 768M384 728L424 730 414 750 426 776M430 776L432 750 446 740 460 710 484 698 486 682M518 772L524 786 498 800 490 820 500 850 496 870 508 900 508 924M524 786L532 820 560 816 584 836 586 860 556 864 550 884M540 766L552 790 572 796 592 830 608 856 610 884 590 902 566 906M586 860L608 864M240 600L228 616 200 612 212 640 186 672 172 690 150 706 162 738 136 742M36 606L80 592 106 578 130 582 156 568 170 580 166 608 146 640 112 656 104 672 50 678 36 650M44 680L68 710 48 730M36 490L60 502 100 502 114 526 134 538 160 516 276 514M36 534L60 550 80 566 106 578M134 538L120 568 130 582M134 538L146 552 186 538 160 534 146 546M130 552L160 556 200 552M172 588L210 584M44 376L36 390 46 400 36 412M640 1026L700 1020 712 986 736 986M1022 1070V1152M36 602L44 630 36 660";
const south: string[] = [
  "M912 156L930 160 970 164 972 176 962 182 954 200 976 214 1014 236 1022 222 1028 182 1040 150 1050 170 1056 194 1072 198 1078 222 1088 246 1112 262 1126 284 1142 298 1168 326 1176 366 1168 406 1148 432 1134 466 1132 480 1110 482 1088 496 1070 484 1056 494 1020 486 1004 462 990 456 976 442 984 424 962 444 950 444 948 432 930 416 904 404 880 406 832 414 806 434 760 434 742 446 720 446 704 436 712 416 706 388 684 342 686 312 690 288 724 272 780 260 796 230 810 222 826 202 850 188 866 200 882 200 884 186 896 170 924 166z",
  "M1068 518L1090 522 1112 520 1108 544 1090 554 1076 544z",
  "M1410 440L1430 456 1446 472 1454 480 1482 482 1478 494 1464 500 1446 528 1436 520 1438 506 1426 500 1436 486 1432 468z",
  "M1410 516L1430 524 1414 552 1396 560 1384 580 1366 590 1336 582 1350 566 1382 552z",
  "M1306 264L1324 276 1342 292 1330 290 1312 276zM1336 200L1348 220 1342 216zM1468 236L1484 234 1480 242zM1484 224L1500 216 1498 222z",
  "M136 616L156 620 156 628 134 628z",
  "M-60 852L36 850 60 852 78 846 136 850 146 862 140 874 124 882 138 886 128 900 150 904 164 902 200 874 244 870 260 858 300 844 362 842 372 830 382 842 520 842 556 822 596 838 630 838 660 830 686 826 704 834 770 843 796 834 870 836 946 830 950 820 966 838 1078 838 1090 850 1180 862 1188 858 1246 872 1282 886 1340 886 1392 898 1370 920 1332 930 1304 946 1298 960 1310 976 1338 980 1338 986 1276 990 1254 1012 1290 1026 1362 1040 1370 1046 1416 1054 1450 1050 1501 1056 1501 1122 -60 1122z",
];

const MapCanvas = () => (
  <main className="min-w-0 flex-1 overflow-hidden border-x border-t border-[#b0b0b0] bg-white">
    <svg width="1546" height="1019" fill="#a97962" stroke="#333" strokeLinejoin="round" role="img" aria-label="World map">
      <path d="M435 243L447 240 474 239 504 240 520 243zM581 243L599 239 620 238 645 237 669 239 688 243z" />
      <g transform="translate(1009 233) scale(.33333)" strokeWidth="3">
        {north.map((d) => <path key={d} d={d} />)}
        <path d={borders} fill="none" />
      </g>
      <g transform="translate(1009 573) scale(.33333)" strokeWidth="3">
        {south.map((d) => <path key={d} d={d} />)}
      </g>
    </svg>
  </main>
);

/* ---------- processing dock ---------- */

const groups = [
  "GPS", "Interpolation", "Layer tools", "Mesh", "Network analysis", "Plots", "Raster analysis", "Raster creation", "Raster terrain analysis",
  "Raster tools", "Vector analysis", "Vector creation", "Vector general", "Vector geometry", "Vector overlay", "Vector selection", "Vector table", "Vector tiles",
];
const Closed = () => <svg viewBox="0 0 4 8" className="h-2 w-1" aria-hidden="true"><path d="M0 0v8l4-4z" fill="#555" /></svg>;
const TreeRow = ({ icon, text, open }: { icon: ReactNode; text: string; open?: boolean }) => (
  <li className="flex h-6 items-center">
    <span className="flex w-5 justify-center">{open ? <Triangle /> : <Closed />}</span>
    <span className="ml-1 flex w-4">{icon}</span>
    <span className="ml-[5px] whitespace-nowrap">{text}</span>
  </li>
);
const Gdal = () => (
  <Ico small>
    <circle cx="14" cy="12" r="9" fill="#6fbfe3" /><path d="M10 6c5-2 8 2 6 5s-4 3-5 0-4-3-1-5z" fill="#2e8b57" /><path d="M1 8l11-7" stroke="#555" strokeWidth="3" />
    <text x="0" y="23" fontSize="10" fontWeight="bold" fill="#111" fontFamily="Noto Sans, sans-serif">GDAL</text>
  </Ico>
);
const Lecos = () => (
  <Ico small>
    <path d="M0 0h24v24H0z" fill="#c9dc62" /><path d="M0 3h8v6H0zM16 14h8v8h-8zM3 18h7v6H3zM17 0h7v6h-7z" fill="#4fc02c" /><path d="M9 0h6v3H9zM0 12h4v4H0z" fill="#f5e9a0" />
    <text x="6" y="19" fontSize="19" fontWeight="bold" fill="#222" fontFamily="Liberation Serif, serif">Σ</text>
  </Ico>
);
const DotsH = () => <div className="ml-auto mr-2.5 h-px w-[17px] bg-[repeating-linear-gradient(90deg,#aaa_0_1px,transparent_1px_3px)]" />;

const ProcessingDock = () => (
  <aside className="flex w-[300px] shrink-0">
    <div className="flex w-[7px] items-start justify-center pt-[585px]">
      <div className="h-[17px] w-px bg-[repeating-linear-gradient(#999_0_1px,transparent_1px_3px)]" />
    </div>
    <div className="flex min-w-0 flex-1 flex-col">
      <h2 className="h-6 shrink-0 pl-1 leading-6">Processing Toolbox</h2>
      <div className="mb-[3px] flex h-7 shrink-0 items-center pl-1">
        <SmallTool name="models" label="Models" /><SmallTool name="pythonSmall" label="Scripts" /><SmallTool name="clock" label="History" />
        <SmallTool name="page" label="Results viewer" on /><SmallSep /><SmallTool name="note" label="Edit in place" /><SmallSep /><SmallTool name="wrench" label="Options" />
      </div>
      <label className="flex h-[29px] shrink-0 items-center gap-2 rounded-l-sm border border-r-0 border-[#aaa] bg-white pl-2">
        <svg viewBox="0 0 14 14" className="size-3.5" fill="none" stroke="#777" strokeWidth="1.300" aria-hidden="true"><circle cx="5.500" cy="5.500" r="4.300" /><path d="M9 9l4 4" /></svg>
        <input type="search" aria-label="Search" placeholder="Search..." className="min-w-0 flex-1 bg-transparent outline-none placeholder:text-[#7c7c7c]" />
      </label>
      <ul className="h-[571px] shrink-0 border-y border-l border-[#b4b4b4] bg-white">
        {groups.map((g) => <TreeRow key={g} text={g} icon={<Ico small><Qlogo /></Ico>} />)}
        <TreeRow text="GDAL" icon={<Gdal />} />
        <TreeRow text="LecoS" icon={<Lecos />} />
        <TreeRow text="Scripts" open icon={<Ico small><Python /></Ico>} />
        <li className="flex h-[22px] items-center gap-[9px] pl-[26px]"><Triangle /><span>Wide2Long scripts</span></li>
        <li className="flex h-6 items-center gap-[7px] bg-[#3c94cc] pl-16 text-white"><svg viewBox="0 0 24 24" className="size-3.5" aria-hidden="true"><Gear c="#9db4e0" /></svg><span>Wide2Long Script</span></li>
      </ul>
      <div className="flex h-[5px] shrink-0 items-center"><DotsH /></div>
      <h2 className="h-[25px] shrink-0 pl-1 leading-[30px]">Results Viewer</h2>
      <div className="h-[248px] shrink-0 border-y border-l border-[#b4b4b4] bg-white" />
      <div className="flex h-1 shrink-0 items-center"><DotsH /></div>
      <div className="flex-1 border-t border-l border-[#b4b4b4] bg-white" />
    </div>
  </aside>
);

/* ---------- windows fading out over the desktop ---------- */

const tabs = ["Gettin", "CaGIS", "AGILE", "localiz", "How t", "How t", "libm-", "Rust C", "Empir", "Disent", "Linear", "nda"];
const files: [string, string, string][] = [
  ["screenshot_install.png", "237,8 KiB", "PNG image"],
  ["README.md", "119 bytes", "Markdown document"],
  ["LICENSE", "34,3 KiB", "plain text document"],
  ["wide_to_long_alg.py", "15,4 KiB", "Python script"],
];
const about: [string, ReactNode][] = [
  ["Readme", <path d="M12 5C9 3 5 3 1 3v16c4 0 8 0 11 2 3-2 7-2 11-2V3c-4 0-8 0-11 2zM12 5v16" />],
  ["GPL-3.0 license", <path d="M12 2v20M6 22h12M2 6h20M5 6l-4 9c2 3 6 3 8 0zM19 6l-4 9c2 3 6 3 8 0z" />],
  ["0 stars", <path d="M12 2l3 7 7 .5-5.500 4.500 2 7.500-6.500-4-6.500 4 2-7.500L2 9.500 9 9z" />],
  ["1 watching", <><path d="M1 12c6-10 16-10 22 0-6 10-16 10-22 0z" /><circle cx="12" cy="12" r="3" /></>],
  ["0 forks", <><circle cx="5" cy="4" r="3" /><circle cx="19" cy="4" r="3" /><circle cx="12" cy="20" r="3" /><path d="M5 7v5h14V7M12 12v5" /></>],
];

const FadingWindows = () => (
  <div className="pointer-events-none absolute inset-0 overflow-hidden whitespace-nowrap font-['Liberation_Sans',Arial,sans-serif]" aria-hidden="true">
    <div className="absolute inset-x-0 top-0 h-[750px] bg-black/[.065]" />
    <div className="absolute top-0 right-0 left-[1139px] h-[170px] bg-linear-to-b from-[#dcefe8]/20 to-[#dcefe8]/5" />
    <div className="absolute top-0 left-[1126px] h-[368px] w-1 bg-white/50" />
    <div className="absolute top-0 left-[1132px] h-[368px] w-[7px] bg-white/70" />
    <div className="absolute top-2 left-1 font-['Liberation_Mono',monospace] text-[17px] text-[#f5dcdc]/50">de2Long plugin</div>
    <div className="absolute top-[51px] left-0 font-['Liberation_Mono',monospace] text-[15px] text-white/50">QGIS 3 processing plugin, to convert wide-column attribute vector data into long format</div>
    <div className="absolute -top-1 left-[1161px] flex text-[12px] leading-4 text-white/50">
      {tabs.map((t, i) => <span key={i} className="w-[90px]">{t}</span>)}
    </div>
    <div className="absolute top-9 left-[1213px] flex items-center gap-3 text-[14px] text-white/50">
      <span className="text-[#f5c98a]/40">Work</span>
      <span className="-ml-2 size-3.5 rounded-sm bg-[#f5c98a]/30" />
      <span className="size-3 border-2 border-white/40" />
      <svg viewBox="0 0 24 24" className="size-[18px]" fill="none" stroke="currentColor" strokeWidth="2"><path d="M12 2l3 7 7 .5-5.500 4.500 2 7.500-6.500-4-6.500 4 2-7.500L2 9.500 9 9z" /></svg>
      <svg viewBox="0 0 24 24" className="ml-6 size-4" fill="none" stroke="currentColor" strokeWidth="2"><circle cx="10" cy="10" r="7" /><path d="M15 15l7 7" /></svg>
      <span className="-ml-2">Search</span>
    </div>
    <div className="absolute top-9 left-[1964px] flex items-center gap-5 text-white/50">
      <svg viewBox="0 0 24 24" className="size-4" fill="none" stroke="currentColor" strokeWidth="2.500"><path d="M3 3h18v8c0 6-4 10-9 10s-9-4-9-10zM8 9l4 4 4-4" /></svg>
      <span className="size-4" />
      <span className="size-4 border-2 border-[#f3b9a0]/30" />
      <span className="size-4 rounded-full border-4 border-[#a8ecd8]/30" />
      <span className="size-4 border-x-4 border-white/40" />
      <span className="size-4 border-4 border-dotted border-white/40" />
    </div>
    <div className="absolute top-[296px] left-[1159px] flex gap-2 text-[14px] text-white/80">
      <span className="flex h-8 w-[90px] items-center justify-center rounded-md border border-white/20">Go to file</span>
      <span className="flex h-8 w-[93px] items-center justify-center rounded-md border border-white/20">Add file ▾</span>
      <span className="flex h-8 w-[78px] items-center justify-center rounded-md bg-[#f0fff0]/60">Code ▾</span>
    </div>
    <div className="absolute top-[296px] left-[1461px] text-[16px] leading-6 text-white/70">
      <div className="flex items-center justify-between font-bold">About
        <svg viewBox="0 0 24 24" className="size-4" fill="none" stroke="currentColor" strokeWidth="2"><circle cx="12" cy="12" r="8" strokeDasharray="4 2" /><circle cx="12" cy="12" r="3" /></svg>
      </div>
      <p className="mt-4">A small QGIS 3 processing plugin, to<br />convert wide-column attribute vector data<br /><span className="text-white/15">into long format</span></p>
    </div>
    <div className="absolute top-[420px] left-[1461px] text-[16px] leading-[29px] text-white/[.07]">
      {about.map(([t, icon]) => (
        <div key={t} className="flex items-center gap-3">
          <svg viewBox="0 0 24 24" className="size-4" fill="none" stroke="currentColor" strokeWidth="2">{icon}</svg>{t}
        </div>
      ))}
    </div>
    <div className="absolute top-[610px] left-[1461px] text-[16px] font-bold text-white/25">Releases</div>
    <div className="absolute top-[180px] left-[1861px] flex h-7 w-28 items-center justify-end rounded-md border border-white/30 pr-3 text-[12px] text-white/50">Edit Pins ▾</div>
    <div className="absolute top-[180px] left-[1981px] flex h-7 w-[132px] items-center justify-end gap-3 rounded-md border border-white/30 pr-3 text-[12px] text-white/60"><span>Unwatch</span><span>1</span><span>▾</span></div>
    <div className="absolute top-[180px] left-[2122px] flex h-7 w-24 items-center rounded-md border border-white/30 pl-9 text-[12px] text-white/60">Fork</div>
    <div className="font-['Noto_Sans',sans-serif]">
      <div className="absolute top-[656px] left-[1678px] text-[13px] font-semibold text-white/60">QgisWide2Long_plugin</div>
      <div className="absolute top-[719px] left-[1352px] text-[14px] text-white/40">ome/akmoch/dev/build/QgisWide2Long_plugin/</div>
      <div className="absolute inset-x-0 top-[777px] h-7 bg-[#2c6cb4]/[.06]" />
      <div className="absolute top-[749px] right-0 left-[1356px] flex text-[14px] leading-7 text-black/[.07]">
        <ul className="w-[560px] shrink-0"><li className="-ml-1 font-bold">me</li>{files.map(([n], i) => <li key={n} className={i === 0 ? "text-white/80" : ""}>{n}</li>)}</ul>
        <ul className="w-[171px] shrink-0 text-right"><li className="pr-8 font-bold">Size</li>{files.map(([n, s]) => <li key={n}>{s}</li>)}</ul>
        <ul className="ml-[9px] shrink-0"><li className="font-bold">Type</li>{files.map(([n, , t]) => <li key={n}>{t}</li>)}</ul>
      </div>
    </div>
  </div>
);

/* ---------- attribute table window ---------- */

const heads = ["2020", "2021", "2022", "2023", "2024", "2025", "2026", "2027", "2028", "2029", "2030"];
const rows: [string, string, string, string][] = [
  ["242", "928", "896,443999 902,899000 909,456999 916,130999 922,955000 929,976999 937,162000 944,456000 951,763000 958,971000 966,019000", "9"],
  ["834", "910", "59734,2130 61498,4380 63298,5420 65136,2379 67014,1300 68934,1579 70896,4550 72900,3439 74946,0050 77033,5069 79162,7229", "8"],
  ["732", "912", "597,330000 611,871999 626,168000 640,260999 654,267000 668,289999 682,298000 696,216999 710,039999 723,748000 737,349000", "7"],
  ["124", "918", "37742,1569 38067,9130 38388,4159 38704,4789 39017,0930 39326,9639 39634,3419 39939,0389 40240,8090 40539,1860 40833,7330", "4"],
  ["840", "918", "331002,646 332915,074 334805,267 336679,231 338542,561 340399,603 342251,974 344100,699 345947,847 347795,041 349641,875", "3"],
  ["398", "5500", "18776,7069 18994,9579 19205,0380 19407,0119 19601,1029 19787,7449 19967,0040 20139,5920 20307,5060 20473,2969 20639,0190", "2"],
  ["860", "5500", "33469,1990 33935,7649 34382,0769 34809,3750 35220,4599 35617,6909 36000,8750 36369,7770 36726,9590 37075,6610 37418,4499", "3"],
  ["598", "928", "8947,02700 9119,00499 9292,17200 9466,43100 9641,70600 9817,91699 9994,96899 10172,7510 10351,1509 10530,0560 10709,3510", "1"],
  ["360", "920", "273523,620 276361,788 279134,505 281844,347 284495,157 287089,641 289628,159 292109,441 294532,570 296896,014 299198,429", "3"],
  ["32", "931", "45195,7770 45605,8229 46010,2339 46409,1730 46803,0509 47192,0950 47576,2679 47955,2160 48328,5129 48695,6279 49056,1619", "4"],
  ["152", "931", "19116,2089 19212,3620 19250,1919 19249,3470 19238,9969 19240,9949 19260,4769 19292,7540 19337,9900 19393,8339 19458,0980", "1"],
  ["180", "911", "89561,4039 92377,9860 95240,7820 98151,9510 101115,264 104133,554 107206,339 110334,112 113515,308 116751,301 120046,720", "1"],
  ["706", "910", "15893,2189 16359,5000 16841,8050 17339,3869 17851,2550 18376,5190 18914,8250 19465,9850 20029,4530 20604,6529 21191,0410", "2"],
  ["404", "910", "53771,3000 54985,7019 56215,2240 57458,8899 58714,8090 59981,3150 61257,8050 62544,0069 63838,8729 65141,2079 66449,6549", "6"],
  ["729", "912", "43849,2690 44909,3510 45992,0179 47095,2549 48216,4289 49353,4769 50505,2209 51671,3070 52851,4309 54045,5590 55253,5310", "5"],
  ["148", "911", "16425,8590 16914,9850 17413,5740 17921,1830 18437,0250 18960,5269 19491,4989 20029,9979 20575,9989 21129,4779 21690,3760", "2"],
  ["332", "915", "11402,5329 11541,6830 11680,2880 11817,9629 11954,1919 12088,5550 12220,9650 12351,5079 12480,2909 12607,4889 12733,2270", "1"],
  ["214", "915", "10847,9040 10953,7139 11056,3739 11155,9169 11252,4760 11346,1569 11436,8469 11524,5220 11609,2350 11691,1419 11770,3160", "1"],
  ["643", "923", "145934,459 145912,021 145805,943 145628,573 145399,122 145132,731 144834,095 144502,581 144142,094 143755,891 143347,513", "1"],
  ["44", "915", "393,247999 396,913999 400,514999 404,048000 407,521999 410,932999 414,274000 417,547000 420,733999 423,827999 426,810000", "4"],
  ["238", "931", "3,48300000 3,52800000 3,53400000 3,51900000 3,48900000 3,46800000 3,45200000 3,44400000 3,44300000 3,44600000 3,43900000", "3"],
  ["578", "924", "5421,24200 5465,62899 5511,37200 5558,02599 5604,80400 5651,09900 5696,88400 5742,39599 5787,49200 5832,02999 5875,92199", "5"],
  ["304", "918", "56,7719999 56,8680000 56,9750000 57,0640000 57,1370000 57,1860000 57,2079999 57,2169999 57,1970000 57,1610000 57,0919999", "5"],
  ["", "", "", ""],
];
const cell = "h-[30px] overflow-hidden border-r border-b border-[#c3c3c3] p-0";
const headCell = "h-[26px] overflow-hidden border-r border-b border-[#c9c9c9] border-b-[#aaa] p-0 pt-0.5 text-center font-normal";

const AttributeWindow = () => (
  <section className="absolute top-[368px] bottom-0 left-0 flex w-[1352px] flex-col overflow-hidden border-t border-[#23262f] bg-[#efefef]" aria-label="Attribute table">
    <div className="flex h-[27px] shrink-0 items-center bg-[#383c4a] pr-[13px] pb-0.5 pl-[397px] text-[#b4bac9]">
      <h1 className="flex-1 text-[12px] font-bold">world_pop_medium_join — Features Total: 177, Filtered: 177, Selected: 0</h1>
      <div className="flex items-center gap-[18px]">
        <button type="button" aria-label="Shade"><svg viewBox="0 0 10 10" className="size-2.5" fill="currentColor"><path d="M5 1l4.500 5h-9zM.5 7.500h9V9h-9z" /></svg></button>
        <button type="button" aria-label="Minimise"><svg viewBox="0 0 10 10" className="size-2.5" fill="currentColor"><path d="M2 4h6v2H2z" /></svg></button>
        <button type="button" aria-label="Maximise"><svg viewBox="0 0 10 10" className="size-2.5" fill="currentColor"><path d="M5 2h4v4zM2 5v4h4z" /></svg></button>
        <button type="button" aria-label="Close"><svg viewBox="0 0 14 14" className="size-3.5"><circle cx="7" cy="7" r="7" fill="#d4535c" /><path d="M4.500 4.500l5 5M9.500 4.500l-5 5" stroke="#383c4a" strokeWidth="1.600" /></svg></button>
      </div>
    </div>
    <div className="flex min-h-0 flex-1 border-r-4 border-[#383c4a]">
      <div className="flex min-w-0 flex-1 flex-col">
        <div className="flex h-[31px] shrink-0 items-center pb-0.5 pl-1">
          <SmallTool name="save" label="Save" off /><SmallTool name="refresh" label="Reload" /><SmallSep />
          <SmallTool name="addRow" label="Add" off /><SmallTool name="trash" label="Delete" off /><SmallTool name="cut" label="Cut rows" off /><SmallTool name="copy" label="Copy rows" off /><SmallTool name="paste" label="Paste rows" off /><SmallSep />
          <SmallTool name="epsilon" label="Select by expression" /><SmallTool name="selectAll" label="Select all" /><SmallTool name="invert" label="Invert selection" /><SmallTool name="deselect" label="Deselect" />
          <SmallTool name="filter" label="Filter" /><SmallTool name="moveTop" label="Move selection to top" /><SmallTool name="panSel" label="Pan to rows" /><SmallTool name="zoomSel" label="Zoom to rows" /><SmallSep />
          <SmallTool name="newField" label="New field" off /><SmallTool name="newField" label="Delete field" off /><SmallTool name="editRow" label="Organise columns" /><SmallTool name="abacus" label="Calculator" /><SmallSep />
          <SmallTool name="form" label="Conditional formatting" /><SmallSep />
          <SmallTool name="actionBlue" label="Actions" /><SmallTool name="dock" label="Dock table" />
        </div>
        <div className="flex min-h-0 flex-1 border-t border-[#b5b5b5]">
          <div className="relative w-[1334px] shrink-0 overflow-hidden bg-white">
            <table className="w-[1424px] table-fixed border-separate border-spacing-0">
              <colgroup><col className="w-6" /><col className="w-[100px]" /><col className="w-[100px]" />{heads.map((h) => <col key={h} className="w-[100px]" />)}<col className="w-[100px]" /></colgroup>
              <thead className="bg-linear-to-b from-[#fbfbfb] to-[#ececec]">
                <tr>
                  <th className={headCell}><div className="flex justify-end pr-[13px]">co</div></th>
                  <th className={headCell}>Type_2</th><th className={headCell}>Parent cod</th>
                  {heads.map((h) => <th key={h} className={headCell}>{h}</th>)}
                  <th className={headCell} aria-label="2031" />
                </tr>
              </thead>
              <tbody>
                {rows.map(([code, parent, values, next], i) => (
                  <tr key={i} className="odd:bg-white even:bg-[#f6f6f6]">
                    <td className={cell}><div className="flex justify-end pr-[3px]">{code}</div></td>
                    <td className={`${cell} pl-[3px]`}>{code && "Country/Area"}</td>
                    <td className={`${cell} pl-[3px]`}>{parent}</td>
                    {heads.map((h, n) => <td key={h} className={cell}><div className="flex justify-end pr-[3px]">{code && values.split(" ")[n] + "…"}</div></td>)}
                    <td className={`${cell} pl-2`}>{next}</td>
                  </tr>
                ))}
              </tbody>
            </table>
            <div role="tooltip" className="absolute top-[351px] left-[946px] border border-black bg-[#ffffdc] px-[3px] py-[3px] leading-5">19292,754000000000815</div>
          </div>
          <div className="flex flex-1 flex-col border-l border-[#bbb] bg-[#e6e6e6]">
            <div className="flex h-3.5 items-center justify-center border-b border-[#bbb] bg-[#fafafa]"><UpArrow /></div>
            <div className="h-[125px] border-b border-[#bbb] bg-linear-to-r from-[#f6f6f6] to-white" />
          </div>
        </div>
      </div>
    </div>
  </section>
);

export default function App() {
  return (
    <div className="relative flex h-screen flex-col overflow-hidden bg-[#efefef] font-['Noto_Sans',sans-serif] text-[14px] text-[#111]">
      <Toolbars />
      <div className="flex min-h-0 flex-1 pt-px">
        <BrowserDock />
        <div className="w-1.5 shrink-0" />
        <MapCanvas />
        <ProcessingDock />
      </div>
      <FadingWindows />
      <div className="pointer-events-none absolute top-[368px] bottom-0 left-0 w-[1352px] shadow-[0_0_26px_rgba(0,0,0,0.45)]" />
      <AttributeWindow />
    </div>
  );
}
